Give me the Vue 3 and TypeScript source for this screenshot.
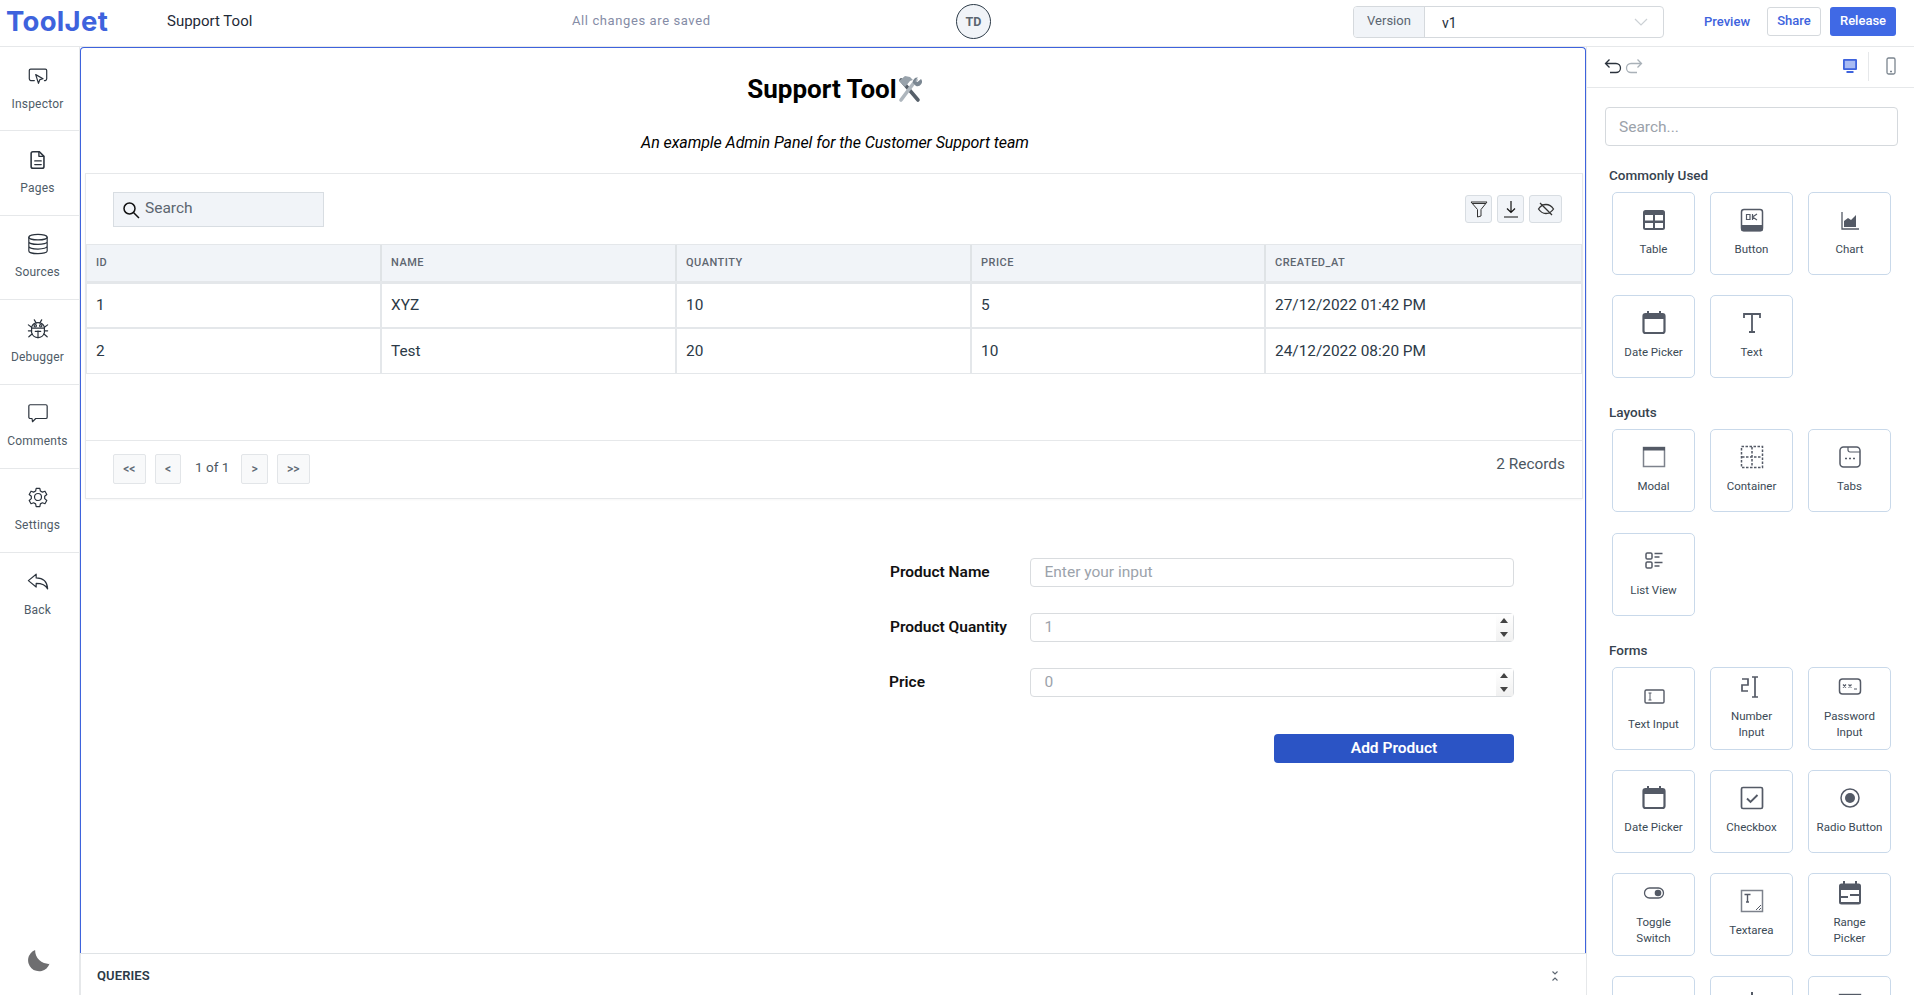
<script setup lang="ts">
interface Widget { label: string; icon: string }
const nav = [
  { label: 'Inspector', icon: 'inspector' },
  { label: 'Pages', icon: 'pages' },
  { label: 'Sources', icon: 'sources' },
  { label: 'Debugger', icon: 'debugger' },
  { label: 'Comments', icon: 'comments' },
  { label: 'Settings', icon: 'settings' },
  { label: 'Back', icon: 'back' },
]
const columns = ['ID', 'NAME', 'QUANTITY', 'PRICE', 'CREATED_AT']
const rows = [
  ['1', 'XYZ', '10', '5', '27/12/2022 01:42 PM'],
  ['2', 'Test', '20', '10', '24/12/2022 08:20 PM'],
]
const groups: { title: string; items: Widget[] }[] = [
  { title: 'Commonly Used', items: [
    { label: 'Table', icon: 'table' }, { label: 'Button', icon: 'button' }, { label: 'Chart', icon: 'chart' },
    { label: 'Date Picker', icon: 'date' }, { label: 'Text', icon: 'text' },
  ] },
  { title: 'Layouts', items: [
    { label: 'Modal', icon: 'modal' }, { label: 'Container', icon: 'container' }, { label: 'Tabs', icon: 'tabs' },
    { label: 'List View', icon: 'list' },
  ] },
  { title: 'Forms', items: [
    { label: 'Text Input', icon: 'textinput' }, { label: 'Number\nInput', icon: 'number' }, { label: 'Password\nInput', icon: 'password' },
    { label: 'Date Picker', icon: 'date' }, { label: 'Checkbox', icon: 'checkbox' }, { label: 'Radio Button', icon: 'radio' },
    { label: 'Toggle\nSwitch', icon: 'toggle' }, { label: 'Textarea', icon: 'textarea' }, { label: 'Range\nPicker', icon: 'range' },
    { label: '', icon: 'none' }, { label: '', icon: 'tip' }, { label: '', icon: 'modal' },
  ] },
]
</script>

<template>
  <div class="app">
    <header class="topbar">
      <div class="logo">ToolJet</div>
      <div class="app-name">Support Tool</div>
      <div class="saved">All changes are saved</div>
      <div class="avatar">TD</div>
      <div class="version">
        <span class="version-label">Version</span>
        <span class="version-value"><span class="v1">v1</span>
          <svg width="16" height="16" viewBox="0 0 16 16" fill="none" stroke="#ccd1d5" stroke-width="1.2"><path d="M2 5l6 6 6-6"/></svg>
        </span>
      </div>
      <a class="preview">Preview</a>
      <a class="share">Share</a>
      <a class="release">Release</a>
    </header>

    <div class="body">
      <aside class="sidebar">
        <div v-for="n in nav" :key="n.label" class="nav-item">
          <svg class="nav-icon" viewBox="0 0 24 24" fill="none" stroke="#2a323c" stroke-width="1.3" stroke-linecap="round" stroke-linejoin="round">
            <template v-if="n.icon === 'inspector'">
              <path d="M8 17H4a2 2 0 0 1-1.5-2V6A1.5 1.5 0 0 1 4 4.500h16A1.500 1.500 0 0 1 21.500 6v9a2 2 0 0 1-1.500 2h-1"/>
              <path d="M10 10l8 4.500-3.500 1-1.500 4z" transform="translate(-.5 .5)"/>
            </template>
            <template v-else-if="n.icon === 'pages'">
              <path d="M6.500 3h7l5 5v11a2 2 0 0 1-2 2h-10a2 2 0 0 1-2-2V5a2 2 0 0 1 2-2z" stroke-width="1.700"/>
              <path d="M13 3v5h5M8.500 13h7M8.500 17h7" stroke-width="1.500"/>
            </template>
            <template v-else-if="n.icon === 'sources'">
              <ellipse cx="12" cy="4.500" rx="10" ry="3"/>
              <path d="M2 4.500v15c0 1.700 4.500 3 10 3s10-1.300 10-3v-15M2 9.500c0 1.700 4.500 3 10 3s10-1.300 10-3M2 14.500c0 1.700 4.500 3 10 3s10-1.300 10-3"/>
            </template>
            <template v-else-if="n.icon === 'debugger'">
              <path d="M5 10c1-3 4-5 7-5s6 2 7 5v6c-1 3-4 5.500-7 5.500S6 19 5 16z"/>
              <path d="M5.500 11h13M12 14v7.500M9 14.500h6M8 2l2 3.500M16 2l-2 3.500M5 10L1.500 7.500M19 10l3.500-2.500M5 14H1.500M19 14h3.500M5.500 17.500L2 20.500M18.500 17.500l3.500 3"/>
              <circle cx="9" cy="8.500" r="1.300"/><circle cx="15" cy="8.500" r="1.300"/>
            </template>
            <template v-else-if="n.icon === 'comments'">
              <path d="M3.500 3h17A1.500 1.500 0 0 1 22 4.500v12a1.500 1.500 0 0 1-1.500 1.500H9.500l-3.500 3.500-.5-3.500h-2A1.500 1.500 0 0 1 2 16.500v-12A1.500 1.500 0 0 1 3.500 3z"/>
            </template>
            <template v-else-if="n.icon === 'settings'">
              <path d="M10 2.500h4l.6 3 2.200 1.200 2.800-1 2 3.500-2.300 2v2.600l2.300 2-2 3.500-2.800-1-2.200 1.200-.6 3h-4l-.6-3-2.200-1.200-2.800 1-2-3.500 2.300-2v-2.600l-2.300-2 2-3.500 2.800 1 2.200-1.200z"/>
              <circle cx="12" cy="12" r="3.800"/>
            </template>
            <template v-else>
              <path d="M1.500 10.500L10 3.500v4c6 0 12 3 12.500 12-2-4-6-6-12.500-6v4z"/>
            </template>
          </svg>
          <span>{{ n.label }}</span>
        </div>
        <svg class="moon" viewBox="0 0 24 24" fill="#6e6e70"><path d="M8.500 1A11.500 11.500 0 1 0 23.500 15.500 14 14 0 0 1 8.500 1z"/></svg>
      </aside>

      <main class="main">
        <section class="canvas">
          <h1 class="title">Support Tool<svg class="emoji" viewBox="0 0 26 28" role="img" aria-label="hammer and wrench">
            <path d="M5 5l17 20" stroke="#57606a" stroke-width="3.600" stroke-linecap="round"/>
            <path d="M20 5L5 25" stroke="#aeb6bd" stroke-width="3.600" stroke-linecap="round"/>
            <path d="M3 6l6-5 5 1 3 3-3 1-5 6z" fill="#98a2ab"/>
            <path d="M24.500 2.500l-3.500 3-2-.5.500-2 2-2a4.500 4.500 0 0 0-5 5.500l3 3a4.500 4.500 0 0 0 5-7z" fill="#7b8792" transform="translate(.5 1.500)"/>
          </svg></h1>
          <p class="subtitle">An example Admin Panel for the Customer Support team</p>

          <div class="table-card">
            <div class="table-tools">
              <div class="table-search">
                <svg width="18" height="18" viewBox="0 0 18 18" fill="none" stroke="#111" stroke-width="1.500"><circle cx="7.500" cy="7.500" r="5.500"/><path d="M11.500 11.500l5.500 5.500"/></svg>
                <span>Search</span>
              </div>
              <div class="tool-btns">
                <span class="tool-btn"><svg width="20" height="20" viewBox="0 0 20 20" fill="none" stroke="#333" stroke-width="1"><path d="M2 3h16l-6 7.500V17l-3.500 1v-7.500zM3 4.500h14"/></svg></span>
                <span class="tool-btn"><svg width="20" height="20" viewBox="0 0 20 20" fill="none" stroke="#111" stroke-width="1.200"><path d="M10 2v11M6 9.500l4 4 4-4M3 18h14"/></svg></span>
                <span class="tool-btn wide"><svg width="18" height="18" viewBox="0 0 18 18" fill="none" stroke="#333" stroke-width="1.300"><path d="M1.500 9C3.500 6 6 4.500 9 4.500S14.500 6 16.500 9c-2 3-4.500 4.500-7.500 4.500S3.500 12 1.500 9zM3 3l12 12"/></svg></span>
              </div>
            </div>
            <div class="tbl">
              <div class="tr head"><div v-for="c in columns" :key="c" class="td">{{ c }}</div></div>
              <div v-for="r in rows" :key="r[0]" class="tr">
                <div v-for="(v, i) in r" :key="i" class="td">{{ v }}</div>
              </div>
            </div>
            <div class="pager">
              <span class="pg w">&lt;&lt;</span>
              <span class="pg n">&lt;</span>
              <span class="pg-text">1 of 1</span>
              <span class="pg">&gt;</span>
              <span class="pg w">&gt;&gt;</span>
              <span class="records">2 Records</span>
            </div>
          </div>

          <div class="form">
            <label class="flabel">Product Name</label>
            <div class="finput">Enter your input</div>
            <label class="flabel">Product Quantity</label>
            <div class="finput">1<span class="spin"><i class="up"></i><i class="down"></i></span></div>
            <label class="flabel price">Price</label>
            <div class="finput">0<span class="spin"><i class="up"></i><i class="down"></i></span></div>
          </div>
          <div class="add-wrap"><button class="add">Add Product</button></div>
        </section>
        <footer class="queries">
          <span>QUERIES</span>
          <svg width="10" height="12" viewBox="0 0 10 12" fill="none" stroke="#5b6570" stroke-width="1.100"><path d="M2.500 1.500L5 4l2.500-2.500M2.500 10.500L5 8l2.500 2.500"/></svg>
        </footer>
      </main>

      <aside class="panel">
        <div class="panel-top">
          <svg width="18" height="16" viewBox="0 0 18 16" fill="none" stroke="#2a323c" stroke-width="1.300"><path d="M5.500 1.500L1.500 5.500l4 4M1.500 5.500H12a4.500 4.500 0 0 1 0 9H6"/></svg>
          <svg width="18" height="16" viewBox="0 0 18 16" fill="none" stroke="#a9b1b8" stroke-width="1.300"><path d="M12.500 1.500l4 4-4 4M16.500 5.500H6a4.500 4.500 0 0 0 0 9h6"/></svg>
          <span class="grow"></span>
          <svg width="16" height="16" viewBox="0 0 16 16"><path d="M2 1h12a1 1 0 0 1 1 1v9a1 1 0 0 1-1 1H2a1 1 0 0 1-1-1V2a1 1 0 0 1 1-1z" fill="#3e63dd"/><path d="M2.800 2.800h10.400v7.400H2.800z" fill="#a8bbf3"/><path d="M4.500 13h7v2h-7z" fill="#3e63dd"/></svg>
          <span class="divider"></span>
          <svg width="12" height="18" viewBox="0 0 12 18" fill="none" stroke="#7b858f" stroke-width="1.300"><rect x="2" y="1" width="8" height="16" rx="1.500"/><path d="M5 14.500h2"/></svg>
        </div>
        <div class="panel-body">
          <div class="panel-search">Search...</div>
          <template v-for="g in groups" :key="g.title">
            <div class="group-title">{{ g.title }}</div>
            <div class="grid">
              <div v-for="(w, wi) in g.items" :key="wi" class="card">
                <svg class="w-icon" viewBox="0 0 24 24" fill="none" stroke="#545a66" stroke-width="1.500">
                  <template v-if="w.icon === 'table'">
                    <rect x="1" y="2" width="22" height="20" rx="2.500" fill="#545a66" stroke="none"/>
                    <rect x="3" y="7" width="8" height="5.500" fill="#fff" stroke="none"/><rect x="13" y="7" width="8" height="5.500" fill="#fff" stroke="none"/>
                    <rect x="3" y="15" width="8" height="5" fill="#fff" stroke="none"/><rect x="13" y="15" width="8" height="5" fill="#fff" stroke="none"/>
                  </template>
                  <template v-else-if="w.icon === 'button'">
                    <rect x="1.500" y="1.500" width="21" height="21" rx="2.500" stroke-width="1.500"/>
                    <path d="M1 17h22v4a2.500 2.500 0 0 1-2.500 2.500h-17A2.500 2.500 0 0 1 1 21z" fill="#545a66" stroke="none"/>
                    <path d="M6.500 6.500h3.500v5H6.500zM12.500 6v6M17 6l-4.500 3 4.500 3" stroke-width="1.200"/>
                  </template>
                  <template v-else-if="w.icon === 'chart'">
                    <path d="M4 4v17h17" stroke-width="1.300"/>
                    <path d="M6 19v-6l4-3 3 2 5-5v12z" fill="#545a66" stroke="none"/>
                  </template>
                  <template v-else-if="w.icon === 'date'">
                    <path d="M6 0v3M18 0v3" stroke-width="2"/>
                    <rect x="1.500" y="3" width="21" height="19" rx="2" stroke-width="2.200"/>
                    <path d="M1.500 4h21v4h-21z" fill="#545a66" stroke="none"/>
                  </template>
                  <template v-else-if="w.icon === 'text'">
                    <path d="M4 7V3h16v4M12 3v18M9 21h6" stroke-width="1.800"/>
                  </template>
                  <template v-else-if="w.icon === 'modal'">
                    <rect x="1.500" y="2.500" width="21" height="19" stroke="#7d828c"/>
                    <path d="M1 2h22v3.500H1z" fill="#545a66" stroke="none"/>
                  </template>
                  <template v-else-if="w.icon === 'container'">
                    <rect x="1.500" y="1.500" width="21" height="21" stroke-dasharray="2.500 1.500"/>
                    <path d="M12 2v20M2 12h20" stroke-dasharray="2.500 1.500"/>
                  </template>
                  <template v-else-if="w.icon === 'tabs'">
                    <rect x="2" y="2" width="20" height="20" rx="3.500"/>
                    <path d="M10 2v3a2 2 0 0 0 2 2h10" stroke-width="1.200"/>
                    <path d="M7 13.500h2M11 13.500h2M15 13.500h2" stroke-width="1.700"/>
                  </template>
                  <template v-else-if="w.icon === 'list'">
                    <rect x="4" y="4" width="6" height="6" rx="1.300"/><rect x="4" y="13" width="6" height="6" rx="1.300"/>
                    <path d="M12.500 4.500h8M12.500 8h5M12.500 13.500h8M12.500 17h5"/>
                  </template>
                  <template v-else-if="w.icon === 'textinput'">
                    <rect x="3" y="7" width="19" height="13" rx="1.300" stroke-width="1.400"/>
                    <path d="M6.500 10h3M8 10v7M6.500 17h3" stroke-width="1"/>
                  </template>
                  <template v-else-if="w.icon === 'number'">
                    <path d="M2 4h6v6H2v6h6M12 2h3M18 2h-3v20h3M12 22h3" stroke-width="1.700"/>
                  </template>
                  <template v-else-if="w.icon === 'password'">
                    <rect x="1.500" y="4" width="21" height="15" rx="3"/>
                    <path d="M5 9.500l3 3M8 9.500l-3 3M10.500 9.500l3 3M13.500 9.500l-3 3M16 14h3" stroke-width="1.200"/>
                  </template>
                  <template v-else-if="w.icon === 'checkbox'">
                    <rect x="1.500" y="1.500" width="21" height="21" rx="1.500" stroke-width="1.700"/>
                    <path d="M7 12.500l3.500 3.500 7-7" stroke-width="1.900"/>
                  </template>
                  <template v-else-if="w.icon === 'radio'">
                    <circle cx="12" cy="12" r="9"/><circle cx="12" cy="12" r="5" fill="#545a66" stroke="none"/>
                  </template>
                  <template v-else-if="w.icon === 'toggle'">
                    <rect x="2.500" y="7" width="19" height="10" rx="5" stroke-width="1.300"/>
                    <circle cx="16" cy="12" r="3.300" fill="#545a66" stroke="none"/>
                  </template>
                  <template v-else-if="w.icon === 'textarea'">
                    <rect x="1.500" y="1.500" width="21" height="21" stroke="#7d828c"/>
                    <path d="M4.500 5.500h6M7.500 5.500v7.500M6 13h3" stroke-width="1.400"/>
                    <path d="M16 21l5-5M19 21l2-2" stroke-width="1"/>
                  </template>
                  <template v-else-if="w.icon === 'tip'">
                    <path d="M12 0v4" stroke-width="2"/>
                  </template>
                  <template v-else-if="w.icon === 'range'">
                    <path d="M6 0v3M18 0v3" stroke-width="2"/>
                    <path d="M3.500 2.500h17a2.500 2.500 0 0 1 2.500 2.500v16a2.500 2.500 0 0 1-2.500 2.500h-17A2.500 2.500 0 0 1 1 21V5a2.500 2.500 0 0 1 2.500-2.500z" fill="#545a66" stroke="none"/>
                    <path d="M3 9h18v4h-9v2h9v6H3v-4h7v-2H3z" fill="#fff" stroke="none"/>
                  </template>
                </svg>
                <span class="w-label">{{ w.label }}</span>
              </div>
            </div>
          </template>
        </div>
      </aside>
    </div>
  </div>
</template>

<style>
html, body { margin: 0; overflow: hidden; background: #fff; }
</style>

<style scoped>
.app { width: 1914px; height: 995px; display: flex; flex-direction: column; font-family: Roboto, "Liberation Sans", sans-serif; color: #2c3a47; overflow: hidden; }
.topbar { height: 46px; flex: none; display: flex; align-items: center; border-bottom: 1px solid #e6e8ea; }
.logo { width: 160px; flex: none; padding-left: 6px; box-sizing: border-box; font-family: Inter, sans-serif; font-weight: 700; font-size: 27.500px; letter-spacing: .3px; color: #3e63dd; line-height: 1; margin-top: -3px; }
.app-name { width: 412px; flex: none; padding-left: 7px; box-sizing: border-box; font-size: 15px; color: #1f2a37; margin-top: -4px; }
.saved { width: 384px; flex: none; font-size: 13px; letter-spacing: .6px; color: #858ca6; margin-top: -5px; }
.avatar { width: 35px; height: 35px; flex: none; border: 1px solid #2c3a47; border-radius: 50%; background: #f1f4f8; display: flex; align-items: center; justify-content: center; font-size: 12.500px; font-weight: 700; color: #5c6670; margin-top: -4px; box-sizing: border-box; }
.version { margin-left: 362px; width: 311px; height: 32px; flex: none; display: flex; border: 1px solid #d5d9dd; border-radius: 4px; box-sizing: border-box; margin-top: -3px; }
.version-label { width: 71px; flex: none; background: #f1f4f8; border-right: 1px solid #d5d9dd; border-radius: 3px 0 0 3px; display: flex; align-items: center; justify-content: center; font-size: 13px; color: #5a6570; padding-bottom: 3px; box-sizing: border-box; }
.version-value { flex: 1; display: flex; align-items: center; justify-content: space-between; padding: 0 14px 0 17px; font-size: 14px; color: #25303b; }
.v1 { padding-top: 2px; }
.preview { margin-left: 40px; width: 45px; font-size: 13px; font-weight: 500; color: #3e63dd; flex: none; margin-top: -4px; white-space: nowrap; }
.share { margin-left: 18px; width: 54px; height: 29px; flex: none; border: 1px solid #d5d9dd; border-radius: 3px; box-sizing: border-box; display: flex; align-items: center; justify-content: center; font-size: 13px; font-weight: 500; color: #3e63dd; margin-top: -3px; padding-bottom: 2px; }
.release { margin-left: 9px; width: 66px; height: 29px; flex: none; border-radius: 3px; background: #4069e5; display: flex; align-items: center; justify-content: center; font-size: 13px; font-weight: 500; color: #fff; margin-top: -3px; padding-bottom: 2px; box-sizing: border-box; }

.body { flex: 1; display: flex; min-height: 0; }
.sidebar { width: 79px; flex: none; position: relative; border-right: 1px solid #e6e8ea; box-sizing: content-box; }
.nav-item { height: 84.400px; box-sizing: border-box; display: flex; flex-direction: column; align-items: center; padding: 17.500px 4px 0 0; border-bottom: 1px solid #e6e8ea; font-size: 12px; letter-spacing: .2px; color: #4f5c68; }
.nav-item:last-of-type { border-bottom: none; }
.nav-icon { width: 22px; height: 22px; margin-bottom: 10px; }
.moon { position: absolute; left: 27px; top: 902px; width: 23px; height: 23px; }

.main { width: 1506px; flex: none; display: flex; flex-direction: column; min-height: 0; }
.canvas { flex: 1; border: 1px solid #3e63dd; border-bottom: none; border-radius: 4px 4px 0 0; box-sizing: border-box; padding: 0 2px 0 4px; min-height: 0; }
.title { margin: 23px 0 0; height: 36px; display: flex; justify-content: center; align-items: center; font-size: 26px; font-weight: 700; line-height: 36px; color: #000; padding-left: 1px; }
.emoji { width: 26px; height: 28px; margin-left: -1px; }
.subtitle { margin: 25px 0 0; text-align: center; font-size: 16px; letter-spacing: -.07px; font-style: italic; color: #000; line-height: 22px; padding-left: 2px; }
.table-card { margin-top: 19px; height: 326px; border: 1px solid #e6e8ea; box-sizing: border-box; box-shadow: 0 1px 2px rgba(0,0,0,.04); display: flex; flex-direction: column; }
.table-tools { height: 70px; flex: none; box-sizing: border-box; padding: 18px 20px 0 27px; display: flex; justify-content: space-between; align-items: flex-start; }
.table-search { width: 211px; height: 35px; box-sizing: border-box; background: #f1f4f8; border: 1px solid #d8dde2; display: flex; align-items: center; gap: 5px; padding-left: 8px; font-size: 15.500px; color: #5c6670; }
.table-search span { margin-top: -3px; }
.tool-btns { display: flex; gap: 5px; margin-top: 3px; }
.tool-btn { width: 27px; height: 28px; box-sizing: border-box; border: 1px solid #d8dde2; border-radius: 3px; background: #f1f4f8; display: flex; align-items: center; justify-content: center; }
.tool-btn.wide { width: 33px; }
.tr { display: grid; grid-template-columns: 295px 295px 295px 294px 1fr; height: 45px; border-bottom: 2px solid #e4e7ea; box-sizing: border-box; border-left: 1px solid #e4e7ea; }
.tr:last-child { border-bottom-width: 1px; }
.tr.head { height: 39.500px; background: #f1f4f8; border-top: 1px solid #e4e7ea; border-bottom-width: 3px; font-weight: 500; letter-spacing: .5px; }
.td { display: flex; align-items: center; padding-left: 9px; border-right: 2px solid #e4e7ea; font-size: 15.400px; color: #2c3a47; }
.head .td { font-size: 11px; color: #5e6670; border-right-color: #dfe3e6; }
.td:last-child { border-right: 1px solid #e4e7ea; }
.pager { margin-top: auto; height: 58px; flex: none; border-top: 1px solid #e6e8ea; box-sizing: border-box; padding: 13px 17px 0 27px; display: flex; align-items: flex-start; }
.pg { width: 27px; height: 30px; box-sizing: border-box; border: 1px solid #e2e5e8; border-radius: 2px; background: #f8f9fa; display: flex; align-items: center; justify-content: center; font-size: 12px; font-weight: 500; color: #5f6a74; margin-right: 9px; }
.pg.w { width: 32.500px; margin-right: 9.500px; }
.pg.n { width: 26px; }
.pg-text { width: 34px; box-sizing: border-box; font-size: 13.500px; color: #4c5761; line-height: 26px; margin-left: 5px; margin-right: 12px; white-space: nowrap; }
.records { margin-left: auto; font-size: 15.400px; color: #4c5761; line-height: 20px; margin-top: 0; }
.form { margin: 59px 0 0 805px; display: grid; grid-template-columns: 139.500px 484px; grid-auto-rows: 29px; row-gap: 26px; align-items: center; }
.flabel { font-size: 15.500px; font-weight: 600; color: #111; padding-bottom: 2px; }
.flabel.price { margin-left: -1px; }
.finput { position: relative; height: 29px; box-sizing: border-box; border: 1px solid #d9dcdf; border-radius: 4px; padding: 0 0 2px 14px; display: flex; align-items: center; font-size: 15.500px; color: #9ca3ab; }
.spin { position: absolute; right: 0; top: 0; bottom: 0; width: 17px; display: flex; flex-direction: column; justify-content: space-between; align-items: center; padding: 4px 0; box-sizing: border-box; background: linear-gradient(#fff, #f1f1f1); }
.up, .down { width: 0; height: 0; border-left: 4px solid transparent; border-right: 4px solid transparent; }
.up { border-bottom: 5px solid #444; }
.down { border-top: 5px solid #444; }
.add-wrap { display: flex; margin: 37px 0 0 1189px; }
.add { width: 240px; height: 29px; border: none; border-radius: 4px; background: #2b54c5; color: #fff; font-family: inherit; font-size: 15.500px; font-weight: 600; padding: 0 0 2px; }
.queries { height: 42px; flex: none; border-top: 1px solid #dfe3e6; border-left: 1px solid #e6e8ea; box-sizing: border-box; display: flex; justify-content: space-between; align-items: center; padding: 2px 26px 0 16px; font-size: 13px; font-weight: 600; color: #2c3a47; letter-spacing: .1px; }

.panel { flex: 1; min-width: 0; border-left: 1px solid #e6e8ea; display: flex; flex-direction: column; }
.panel-top { height: 41px; flex: none; display: flex; align-items: center; box-sizing: border-box; border-bottom: 1px solid #e6e8ea; padding: 0 17px 2px 17px; gap: 3px; }
.grow { flex: 1; }
.divider { width: 1px; height: 29px; background: #e6e8ea; margin: 0 13px 0 7px; }
.panel-body { padding: 19px 0 0 18px; }
.panel-search { width: 293px; height: 39px; box-sizing: border-box; border: 1px solid #d5d9dd; border-radius: 4px; padding-left: 13px; display: flex; align-items: center; font-size: 15.500px; color: #9ba2aa; }
.group-title { margin: 20px 0 8px 4px; font-size: 13.500px; font-weight: 500; line-height: 18px; color: #37434f; }
.grid { display: grid; grid-template-columns: repeat(3, 83px); grid-auto-rows: 83px; column-gap: 15px; row-gap: 20.300px; margin-left: 7px; margin-bottom: 25px; }
.card { box-sizing: border-box; border: 1px solid #c9d9ea; border-radius: 5px; display: flex; flex-direction: column; align-items: center; justify-content: center; gap: 9px; padding: 0 0 2px; }
.w-icon { width: 24px; height: 24px; flex: none; }
.w-label { font-size: 11.500px; line-height: 16px; min-height: 16px; text-align: center; color: #3b4a56; white-space: pre-line; }
</style>
